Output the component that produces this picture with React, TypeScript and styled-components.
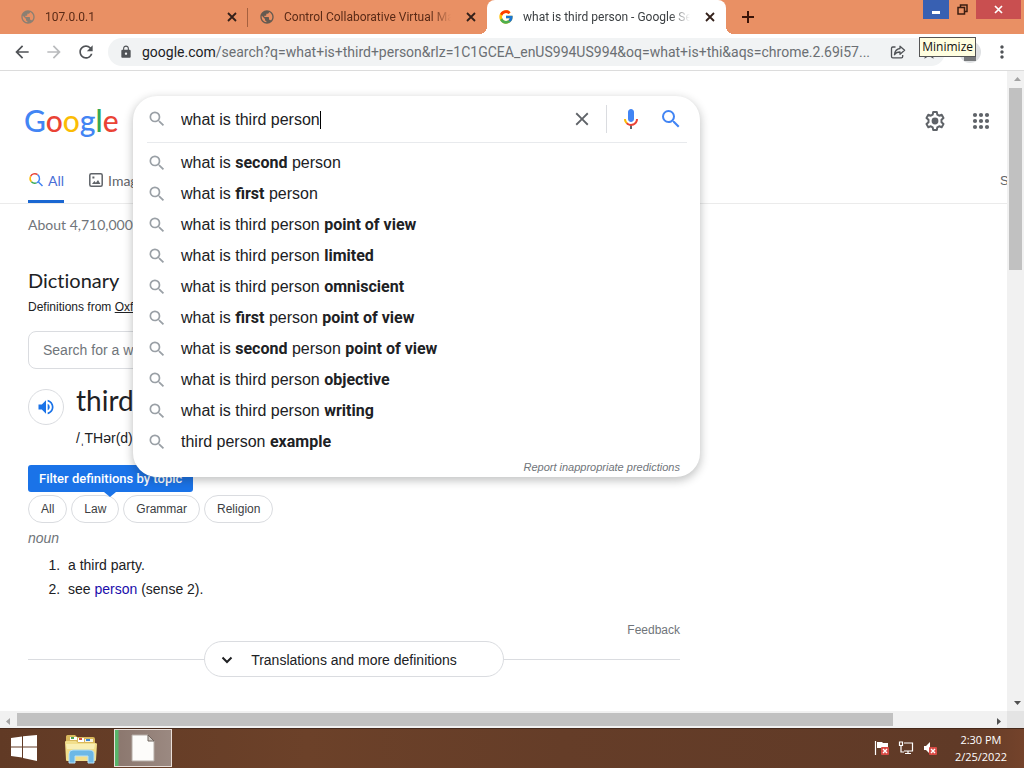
import React from "react";
import styled, { createGlobalStyle } from "styled-components";
import {
  MdArrowBack,
  MdArrowForward,
  MdClose,
  MdLock,
  MdMoreVert,
  MdOutlineStarBorder,
  MdPublic,
  MdRefresh,
  MdSearch,
  MdVolumeUp,
} from "react-icons/md";
import { FcGoogle } from "react-icons/fc";

const ui = `"Open Sans", "Noto Sans", sans-serif`;
const chrome = `Roboto, "Noto Sans", sans-serif`;
const display = `Lato, "Open Sans", sans-serif`;
const body = `"Liberation Sans", Arial, sans-serif`;

const GlobalStyle = createGlobalStyle`
  *, *::before, *::after { box-sizing: border-box; }
  html, body { margin: 0; padding: 0; }
  body { background: #fff; color: #202124; font-family: ${body}; overflow: hidden; }
  button, input { font: inherit; color: inherit; margin: 0; padding: 0; border: 0; background: none; outline: 0; }
  button { cursor: pointer; display: inline-flex; align-items: center; justify-content: center; }
  svg { display: block; flex: none; }
  h1, h2, p, ol, ul { margin: 0; padding: 0; font-weight: 400; }
`;

const Desktop = styled.div`
  display: flex;
  flex-direction: column;
  height: 100vh;
  overflow: hidden;
`;

/* ---------- browser chrome ---------- */

const TabStrip = styled.header`
  display: flex;
  height: 34px;
  padding-left: 9px;
  background: #e99064;
  font-family: ${chrome};
  font-size: 12px;
  flex: none;
`;

const Tab = styled.div<{ $active?: boolean }>`
  position: relative;
  display: flex;
  align-items: center;
  gap: 9px;
  width: 239px;
  padding: 0 9px 0 11px;
  color: ${(p) => (p.$active ? "#3c4043" : "#5a2a16")};
  background: ${(p) => (p.$active ? "#fff" : "transparent")};
  border-radius: 8px 8px 0 0;

  &::before, &::after {
    content: ${(p) => (p.$active ? `""` : "none")};
    position: absolute;
    bottom: 0;
    width: 8px;
    height: 8px;
  }
  &::before { right: 100%; background: radial-gradient(circle at 0 0, #e99064 8px, #fff 8px); }
  &::after { left: 100%; background: radial-gradient(circle at 100% 0, #e99064 8px, #fff 8px); }
`;

const TabDivider = styled.span`
  position: absolute;
  right: 0;
  top: 8px;
  width: 1px;
  height: 19px;
  background: #a5603f;
`;

const TabTitle = styled.span`
  flex: 1;
  overflow: hidden;
  white-space: nowrap;
  mask-image: linear-gradient(to right, #000 88%, transparent);
`;

const TabClose = styled.button`
  width: 14px;
  height: 14px;
  margin-left: 4px;
  color: #33201a;
`;

const NewTab = styled.button`
  width: 24px;
  height: 34px;
  margin-left: 10px;
  color: #3a1408;
`;

const WindowButtons = styled.div`
  position: relative;
  display: flex;
  margin-left: auto;
  padding-right: 3px;
`;

const WindowButton = styled.button<{ $tone: string; $width: number }>`
  width: ${(p) => p.$width}px;
  height: 19px;
  background: ${(p) => p.$tone};
`;

const Tooltip = styled.div`
  position: absolute;
  z-index: 5;
  top: 37px;
  right: 48px;
  height: 20px;
  padding: 0 2px;
  border: 1px solid #555;
  background: #fffee0;
  color: #111;
  font-family: ${ui};
  font-size: 12px;
  line-height: 18px;
`;

const Toolbar = styled.nav`
  display: flex;
  align-items: center;
  height: 37px;
  padding: 0 12px;
  border-bottom: 1px solid #dcdcdc;
  background: #fff;
  color: #505357;
  flex: none;
`;

const ToolButton = styled.button<{ $faint?: boolean }>`
  width: 20px;
  height: 20px;
  margin-right: 12px;
  color: ${(p) => (p.$faint ? "#b9bbbd" : "inherit")};
`;

const Omnibox = styled.div`
  display: flex;
  flex: 1;
  align-items: center;
  gap: 9px;
  min-width: 0;
  height: 28px;
  padding: 0 7px 0 11px;
  border-radius: 14px;
  background: #f1f3f4;
`;

const Url = styled.p`
  flex: 1;
  overflow: hidden;
  color: #6b6f73;
  font-family: ${chrome};
  font-size: 14px;
  line-height: 20px;
  white-space: nowrap;
  b { color: #202124; font-weight: 400; }
`;

const PageActions = styled.div`
  display: flex;
  align-items: center;
  gap: 14px;
`;

const Avatar = styled.span`
  display: flex;
  align-items: flex-end;
  justify-content: center;
  width: 22px;
  height: 22px;
  margin: 0 11px 0 14px;
  border-radius: 50%;
  background: #dfe1e3;
  overflow: hidden;
`;

/* ---------- page ---------- */

const Viewport = styled.div`
  display: grid;
  grid-template-columns: minmax(0, 1fr) 17px;
  grid-template-rows: minmax(0, 1fr) 17px;
  flex: 1;
  min-height: 0;
`;

const Page = styled.main`
  overflow: hidden;
  background: #fff;
`;

const Sheet = styled.div`
  width: calc(100% + 114px);
`;

const PageHeader = styled.header`
  display: flex;
  align-items: flex-start;
  height: 91px;
  padding: 25px 128px 0 24px;
`;

const Logo = styled.a`
  width: 109px;
  font-family: ${display};
  font-size: 30px;
  font-weight: 500;
  line-height: 48px;
  text-decoration: none;
`;

const Letter = styled.span<{ $tone: string }>`
  color: ${(p) => p.$tone};
`;

const SearchSlot = styled.div`
  position: relative;
  z-index: 2;
  width: 567px;
  height: 46px;
`;

const SearchPanel = styled.form`
  position: absolute;
  top: 0;
  left: 0;
  right: 0;
  border-radius: 24px;
  background: #fff;
  box-shadow: 0 3px 8px 1px rgba(32, 33, 36, 0.26);
`;

const SearchRow = styled.div`
  display: flex;
  align-items: center;
  height: 47px;
  margin: 0 13px 0 14px;
  border-bottom: 1px solid #e8eaed;
`;

const QueryLabel = styled.label`
  display: flex;
  flex: 1;
  align-items: center;
  gap: 14px;
  color: #9aa0a6;
`;

const QueryField = styled.span`
  display: flex;
  align-items: center;
  flex: 1;
  padding-top: 2px;
  color: #202124;
`;

const QueryInput = styled.input`
  field-sizing: content;
  font-size: 16px;
  line-height: 20px;
`;

const Caret = styled.span`
  width: 1px;
  height: 18px;
  background: #000;
`;

const IconButton = styled.button<{ $tone: string }>`
  width: 24px;
  height: 28px;
  color: ${(p) => p.$tone};
`;

const SearchTools = styled.div`
  display: flex;
  gap: 16px;
  margin-left: 12px;
  padding: 0 4px 0 12px;
  border-left: 1px solid #dadce0;
`;

const Suggestions = styled.ul`
  padding: 4px 14px 0;
  list-style: none;
`;

const Suggestion = styled.li`
  display: flex;
  align-items: center;
  gap: 14px;
  height: 31px;
  font-size: 16px;
  svg { color: #9aa0a6; }
  b { font-family: Roboto, sans-serif; font-weight: 700; }
`;

const Report = styled.a`
  display: block;
  height: 20px;
  padding-right: 20px;
  color: #70757a;
  font-size: 11px;
  font-style: italic;
  line-height: 20px;
  text-align: right;
  text-decoration: none;
`;

const HeaderActions = styled.div`
  display: flex;
  gap: 22px;
  margin-left: auto;
  padding-top: 11px;
  color: #5f6368;
`;

const Filters = styled.nav`
  display: flex;
  gap: 24px;
  height: 42px;
  padding: 0 28px;
  border-bottom: 1px solid #ebebeb;
`;

const Filter = styled.a<{ $active?: boolean }>`
  display: flex;
  align-items: center;
  gap: 4px;
  height: 41px;
  padding-bottom: 2px;
  border-bottom: 3px solid ${(p) => (p.$active ? "#1a67d2" : "transparent")};
  color: ${(p) => (p.$active ? "#4a6fd6" : "#5f6368")};
  font-family: ${display};
  font-size: 14px;
  text-decoration: none;
`;

const SafeSearch = styled.a`
  width: 93px;
  margin-left: auto;
  color: #5f6368;
  font-size: 13px;
  line-height: 38px;
  text-decoration: none;
`;

const Column = styled.article`
  width: 680px;
  padding: 11px 0 0 28px;
`;

const Stats = styled.p`
  color: #70757a;
  font-family: ${display};
  font-size: 14px;
  line-height: 20px;
`;

const Heading = styled.h2`
  margin-top: 31px;
  font-family: ${display};
  font-size: 20px;
  font-variant-ligatures: none;
  line-height: 28px;
`;

const Source = styled.p`
  margin-top: 3px;
  font-size: 12px;
  line-height: 20px;
  a { color: inherit; }
`;

const WordInput = styled.input`
  display: block;
  width: 420px;
  height: 38px;
  margin-top: 14px;
  padding: 0 14px;
  border: 1px solid #dadce0;
  border-radius: 8px;
  font-size: 14px;
  &::placeholder { color: #70757a; opacity: 1; }
`;

const Entry = styled.section`
  display: flex;
  gap: 12px;
  margin-top: 13px;
`;

const Speak = styled.button`
  width: 36px;
  height: 36px;
  margin-top: 7px;
  border: 1px solid #dadce0;
  border-radius: 50%;
  color: #1a73e8;
`;

const Word = styled.h1`
  font-family: ${display};
  font-size: 28px;
  line-height: 36px;
`;

const Phonetic = styled.p`
  margin-top: 10px;
  font-size: 14px;
  line-height: 20px;
`;

const Hint = styled.div`
  position: relative;
  width: fit-content;
  height: 27px;
  margin-top: 17px;
  padding: 0 11px;
  border-radius: 3px;
  background: #1a73e8;
  color: #fff;
  font-family: Roboto, sans-serif;
  font-size: 13px;
  font-weight: 500;
  line-height: 27px;

  &::after {
    content: "";
    position: absolute;
    top: 100%;
    left: 76px;
    border: 6px solid transparent;
    border-top: 5px solid #1a73e8;
  }
`;

const Chips = styled.div`
  display: flex;
  gap: 4px;
  margin-top: 3px;
`;

const Chip = styled.button`
  height: 28px;
  padding: 0 12px;
  border: 1px solid #dadce0;
  border-radius: 14px;
  color: #3c4043;
  font-size: 12px;
`;

const PartOfSpeech = styled.p`
  margin-top: 5px;
  color: #70757a;
  font-size: 14px;
  font-style: italic;
  line-height: 20px;
`;

const Senses = styled.ol`
  margin-top: 5px;
  padding-left: 36px;
  font-size: 14px;
  line-height: 24px;
  li { padding-left: 4px; }
  a { color: #1a0dab; text-decoration: none; }
`;

const Feedback = styled.a`
  display: block;
  margin-top: 19px;
  color: #70757a;
  font-size: 12px;
  line-height: 20px;
  text-align: right;
  text-decoration: none;
`;

const MoreRow = styled.div`
  display: flex;
  align-items: center;
  margin-top: 1px;
  &::before, &::after { content: ""; flex: 1; height: 1px; background: #dadce0; }
`;

const MoreButton = styled.button`
  gap: 18px;
  width: 300px;
  height: 36px;
  padding: 1px 30px 0 0;
  border: 1px solid #dadce0;
  border-radius: 18px;
  font-size: 14px;
`;

/* ---------- scroll bars ---------- */

const Scrollbar = styled.div<{ $vertical?: boolean }>`
  display: flex;
  flex-direction: ${(p) => (p.$vertical ? "column" : "row")};
  background: #f1f1f1;
  padding: ${(p) => (p.$vertical ? "0 2px" : "2px 0")};
`;

const ScrollArrow = styled.button`
  width: 17px;
  height: 17px;
  margin: auto;
  flex: none;
`;

const ScrollTrack = styled.div<{ $vertical?: boolean }>`
  display: flex;
  flex: 1;
  flex-direction: ${(p) => (p.$vertical ? "column" : "row")};
`;

const ScrollThumb = styled.div<{ $share: number }>`
  flex: 0 0 ${(p) => p.$share}%;
  background: #c1c1c1;
`;

const Corner = styled.div`
  background: #e4e4e4;
`;

/* ---------- taskbar ---------- */

const Taskbar = styled.footer`
  display: flex;
  align-items: center;
  height: 40px;
  padding: 0 17px 0 10px;
  background: linear-gradient(90deg, #613a25, #6c4129 30%, #653d28 55%, #603a27 94%, #74432b);
  box-shadow: inset 0 1px #46291b;
  color: #fff;
  flex: none;
`;

const StartButton = styled.button`
  width: 28px;
  height: 38px;
  margin-right: 23px;
`;

const TaskButton = styled.button<{ $open?: boolean }>`
  width: ${(p) => (p.$open ? 58 : 40)}px;
  height: 38px;
  margin-right: 13px;
  border: ${(p) => (p.$open ? "1px solid #eadfd9" : "0")};
  background: ${(p) => (p.$open ? "linear-gradient(90deg, #58b56a 3px, #8c786f 4px, #9b8981)" : "none")};
`;

const Tray = styled.div`
  display: flex;
  align-items: center;
  gap: 8px;
  margin-left: auto;
`;

const Clock = styled.time`
  margin-left: 9px;
  font-family: ${ui};
  font-size: 11px;
  line-height: 17px;
  text-align: center;
`;

/* ---------- drawings ---------- */

function TabCross() {
  return (
    <svg width="10" height="10" viewBox="0 0 10 10" stroke="currentColor" strokeWidth="1.8">
      <path d="M1 1l8 8M9 1L1 9" />
    </svg>
  );
}

function Gear() {
  return (
    <svg width="24" height="24" viewBox="0 0 24 24">
      <path
        fill="none"
        stroke="currentColor"
        strokeWidth="2"
        strokeLinejoin="round"
        d="M10.2 3h3.6l.5 2.6 1.9 1.1 2.5-.9 1.8 3.1-2 1.8v2.6l2 1.8-1.8 3.1-2.5-.9-1.9 1.1-.5 2.6h-3.6l-.5-2.6-1.9-1.1-2.5.9-1.8-3.1 2-1.8v-2.6l-2-1.8 1.8-3.1 2.5.9 1.9-1.1z"
      />
      <circle cx="12" cy="12" r="3.4" fill="currentColor" />
    </svg>
  );
}

function AppsGrid() {
  return (
    <svg width="24" height="24" viewBox="0 0 24 24" fill="currentColor">
      {[6, 12, 18].map((y) => [6, 12, 18].map((x) => <circle key={`${x}-${y}`} cx={x} cy={y} r="2.100" />))}
    </svg>
  );
}

function Mic() {
  return (
    <svg width="24" height="24" viewBox="0 0 24 24">
      <path fill="#4285f4" d="m12 15c1.66 0 3-1.31 3-2.97v-7.02c0-1.66-1.34-3.01-3-3.01s-3 1.34-3 3.01v7.02c0 1.66 1.34 2.97 3 2.97z" />
      <path fill="#5f6368" d="m11 18.08h2v3.92h-2z" />
      <path fill="#fbbc05" d="m7.05 16.87c-1.27-1.33-2.05-2.83-2.05-4.87h2c0 1.45.56 2.42 1.47 3.38v.32l-1.15 1.18z" />
      <path fill="#ea4335" d="m12 16.93a4.97 5.25 0 0 1-3.54-1.55l-1.41 1.49c1.26 1.34 3.02 2.13 4.95 2.13 3.87 0 6.99-2.92 6.99-7h-1.99c0 2.92-2.24 4.93-5 4.93z" />
    </svg>
  );
}

function ColorLens() {
  return (
    <svg width="16" height="16" viewBox="0 0 16 16" fill="none" strokeWidth="1.5">
      <path stroke="#ea4335" d="M2.5 4.5A4.8 4.8 0 0 1 9.6 2.6" />
      <path stroke="#fbbc05" d="M3.4 9.7a4.8 4.8 0 0 1-.9-5.2" />
      <path stroke="#34a853" d="M8.6 10.9a4.8 4.8 0 0 1-5.2-1.2" />
      <path stroke="#4285f4" d="M9.6 2.6a4.8 4.8 0 0 1-1 8.3M10.2 9.7l4.3 4.3" />
    </svg>
  );
}

function PictureIcon() {
  return (
    <svg width="16" height="16" viewBox="0 0 16 16">
      <rect x="1.8" y="1.8" width="12.4" height="12.4" rx="1.5" fill="none" stroke="currentColor" strokeWidth="1.5" />
      <path fill="currentColor" d="M4 12l2.4-3 1.5 1.7L10 8l2.4 4zM4.4 4.4h2v2h-2z" />
    </svg>
  );
}

function ShareIcon() {
  return (
    <svg width="16" height="16" viewBox="0 0 16 16" fill="none" stroke="currentColor" strokeWidth="1.3" strokeLinejoin="round">
      <path d="M5.5 3H2.8A1.3 1.3 0 0 0 1.5 4.3v8.2a1.3 1.3 0 0 0 1.3 1.3h8.6a1.3 1.3 0 0 0 1.3-1.3V11" />
      <path d="M10 2.2l4.6 4-4.6 4V8C7.3 8 5.6 8.9 4.5 10.7 4.8 7.4 6.7 4.9 10 4.5z" />
    </svg>
  );
}

function WindowsLogo() {
  return (
    <svg width="28" height="28" viewBox="0 0 28 28" fill="#fff">
      <path d="M1 4l11-1.600v10.100H1zM13 2.200L27 1v11.500H13zM1 13.500h11v10.100L1 22zM13 13.500h14V27l-14-3z" />
    </svg>
  );
}

function FolderIcon() {
  return (
    <svg width="34" height="32" viewBox="0 0 34 32">
      <path d="M2 4.5Q2 3 3.500 3H11l2 2h16q2 0 2 2v6H2z" fill="#d9b85c" />
      <path d="M6 5h7v3H6zM14 6h6v4h-6z" fill="#fff" />
      <path d="M21 7h8v3h-8z" fill="#f7f4e4" />
      <path d="M7 5h3v2H7z" fill="#4aa152" />
      <path d="M15 6h3v2h-3z" fill="#d2503c" />
      <path d="M22 7h4v2h-4z" fill="#3f86cf" />
      <path d="M1 10Q1 9 2 9h10l2 2h17q2 0 2 1l-1 16q0 1-1 1H3q-1 0-1-1z" fill="#f2df8c" />
      <path d="M2 12h29l-1 5H3z" fill="#f9efb4" />
      <path d="M5 31v-9q0-4 4-4h16q5 0 5 4v9h-6v-7H11v7z" fill="#6db8e6" stroke="#b9e2f7" />
    </svg>
  );
}

function PageIcon() {
  return (
    <svg width="24" height="28" viewBox="0 0 24 28">
      <path d="M1 1h16l6 6v20H1z" fill="#fdfcfa" stroke="#b5aca6" />
      <path d="M17 1v6h6z" fill="#cfc8c2" stroke="#6f645d" />
    </svg>
  );
}

function RedCross() {
  return (
    <>
      <rect x="7" y="7" width="8" height="8" rx="1" fill="#d94b45" />
      <path d="M9 9l4 4M13 9l-4 4" stroke="#fff" strokeWidth="1.4" />
    </>
  );
}

function FlagIcon() {
  return (
    <svg width="16" height="16" viewBox="0 0 16 16">
      <path d="M1.500 1v14" stroke="#fff" strokeWidth="1.200" />
      <path d="M3 2h5l1 1h5v6H9L8 8H3z" fill="#fff" />
      <RedCross />
    </svg>
  );
}

function NetworkIcon() {
  return (
    <svg width="16" height="16" viewBox="0 0 16 16" fill="none" stroke="#fff" strokeWidth="1.200">
      <path d="M6 3h8.500v8H6M7 13.500h6M10 11v2.500M3 6v6h3" />
      <path d="M1.500 2h3v3.500h-3z" />
    </svg>
  );
}

function MutedIcon() {
  return (
    <svg width="16" height="16" viewBox="0 0 16 16">
      <path d="M2 6h2l4-4v12L4 10H2z" fill="#fff" />
      <RedCross />
    </svg>
  );
}

function Arrow({ d, tone }: { d: string; tone: string }) {
  return (
    <svg width="9" height="9" viewBox="0 0 9 9">
      <path d={d} fill={tone} />
    </svg>
  );
}

/* ---------- data ---------- */

const suggestions: React.ReactNode[] = [
  <>what is <b>second</b> person</>,
  <>what is <b>first</b> person</>,
  <>what is third person <b>point of view</b></>,
  <>what is third person <b>limited</b></>,
  <>what is third person <b>omniscient</b></>,
  <>what is <b>first</b> person <b>point of view</b></>,
  <>what is <b>second</b> person <b>point of view</b></>,
  <>what is third person <b>objective</b></>,
  <>what is third person <b>writing</b></>,
  <>third person <b>example</b></>,
];

const logoLetters: [string, string][] = [
  ["G", "#4285f4"],
  ["o", "#ea4335"],
  ["o", "#fbbc05"],
  ["g", "#4285f4"],
  ["l", "#34a853"],
  ["e", "#ea4335"],
];

function BrowserChrome() {
  return (
    <>
      <TabStrip>
        <Tab>
          <MdPublic size={16} color="#8b7f72" />
          <TabTitle>107.0.0.1</TabTitle>
          <TabClose aria-label="Close tab"><TabCross /></TabClose>
          <TabDivider />
        </Tab>
        <Tab>
          <MdPublic size={16} color="#655a50" />
          <TabTitle>Control Collaborative Virtual Machine</TabTitle>
          <TabClose aria-label="Close tab"><TabCross /></TabClose>
        </Tab>
        <Tab $active>
          <FcGoogle size={16} />
          <TabTitle>what is third person - Google Search</TabTitle>
          <TabClose aria-label="Close tab"><TabCross /></TabClose>
        </Tab>
        <NewTab aria-label="New tab">
          <svg width="12" height="12" viewBox="0 0 12 12" stroke="currentColor" strokeWidth="2">
            <path d="M6 0v12M0 6h12" />
          </svg>
        </NewTab>
        <WindowButtons>
          <WindowButton $tone="#3860b2" $width={26} aria-label="Minimize">
            <svg width="8" height="10" viewBox="0 0 8 10"><path d="M0 6h8v3H0z" fill="#fff" /></svg>
          </WindowButton>
          <WindowButton $tone="transparent" $width={27} aria-label="Restore">
            <svg width="11" height="11" viewBox="0 0 11 11" fill="none" stroke="#3a1c10" strokeWidth="1.500">
              <path d="M1 3.500h6.500V10H1zM3.500 3V1H10v6.500H8" />
            </svg>
          </WindowButton>
          <WindowButton $tone="#c94f50" $width={45} aria-label="Close">
            <svg width="9" height="9" viewBox="0 0 9 9" stroke="#fff" strokeWidth="1.700"><path d="M1 1l7 7M8 1L1 8" /></svg>
          </WindowButton>
          <Tooltip role="tooltip">Minimize</Tooltip>
        </WindowButtons>
      </TabStrip>
      <Toolbar>
        <ToolButton aria-label="Back"><MdArrowBack size={20} /></ToolButton>
        <ToolButton aria-label="Forward" $faint><MdArrowForward size={20} /></ToolButton>
        <ToolButton aria-label="Reload"><MdRefresh size={20} /></ToolButton>
        <Omnibox>
          <MdLock size={14} />
          <Url>
            <b>google.com</b>/search?q=what+is+third+person&amp;rlz=1C1GCEA_enUS994US994&amp;oq=what+is+thi&amp;aqs=chrome.2.69i57...
          </Url>
          <PageActions>
            <ShareIcon />
            <MdOutlineStarBorder size={18} />
          </PageActions>
        </Omnibox>
        <Avatar>
          <svg width="14" height="9" viewBox="0 0 14 9"><path d="M1 0h12v7H1z" fill="#77797b" /></svg>
        </Avatar>
        <button aria-label="Menu"><MdMoreVert size={20} /></button>
      </Toolbar>
    </>
  );
}

function SearchBox() {
  return (
    <SearchSlot>
      <SearchPanel role="search">
        <SearchRow>
          <QueryLabel>
            <MdSearch size={20} aria-label="Search" />
            <QueryField>
              <QueryInput defaultValue="what is third person" />
              <Caret />
            </QueryField>
          </QueryLabel>
          <IconButton type="button" $tone="#5f6368" aria-label="Clear"><MdClose size={22} /></IconButton>
          <SearchTools>
            <IconButton type="button" $tone="#4285f4" aria-label="Search by voice"><Mic /></IconButton>
            <IconButton type="submit" $tone="#4285f4" aria-label="Google Search"><MdSearch size={24} /></IconButton>
          </SearchTools>
        </SearchRow>
        <Suggestions>
          {suggestions.map((text, i) => (
            <Suggestion key={i}>
              <MdSearch size={20} />
              <span>{text}</span>
            </Suggestion>
          ))}
        </Suggestions>
        <Report href="#report">Report inappropriate predictions</Report>
      </SearchPanel>
    </SearchSlot>
  );
}

function ResultsPage() {
  return (
    <Page>
      <Sheet>
        <PageHeader>
          <Logo href="#home" aria-label="Google">
            {logoLetters.map(([letter, tone], i) => (
              <Letter key={i} $tone={tone}>{letter}</Letter>
            ))}
          </Logo>
          <SearchBox />
          <HeaderActions>
            <IconButton $tone="#5f6368" aria-label="Settings"><Gear /></IconButton>
            <IconButton $tone="#5f6368" aria-label="Google apps"><AppsGrid /></IconButton>
          </HeaderActions>
        </PageHeader>
        <Filters>
          <Filter $active href="#all"><ColorLens />All</Filter>
          <Filter href="#images"><PictureIcon />Images</Filter>
          <SafeSearch href="#safe">SafeSearch on</SafeSearch>
        </Filters>
        <Column>
          <Stats>About 4,710,000,000 results</Stats>
          <Heading>Dictionary</Heading>
          <Source>Definitions from <a href="#oxford">Oxford Languages</a></Source>
          <WordInput aria-label="Search for a word" placeholder="Search for a word" />
          <Entry>
            <Speak aria-label="Listen"><MdVolumeUp size={20} /></Speak>
            <div>
              <Word>third person</Word>
              <Phonetic>/ˌTHər(d) ˈpərs(ə)n/</Phonetic>
            </div>
          </Entry>
          <Hint>Filter definitions by topic</Hint>
          <Chips>
            <Chip>All</Chip>
            <Chip>Law</Chip>
            <Chip>Grammar</Chip>
            <Chip>Religion</Chip>
          </Chips>
          <PartOfSpeech>noun</PartOfSpeech>
          <Senses>
            <li>a third party.</li>
            <li>see <a href="#person">person</a> (sense 2).</li>
          </Senses>
          <Feedback href="#feedback">Feedback</Feedback>
          <MoreRow>
            <MoreButton>
              <svg width="12" height="8" viewBox="0 0 12 8" fill="none" stroke="#202124" strokeWidth="2"><path d="M1.500 1.500L6 6l4.500-4.500" /></svg>
              Translations and more definitions
            </MoreButton>
          </MoreRow>
        </Column>
      </Sheet>
    </Page>
  );
}

export default function App() {
  return (
    <Desktop>
      <GlobalStyle />
      <BrowserChrome />
      <Viewport>
        <ResultsPage />
        <Scrollbar $vertical>
          <ScrollArrow aria-label="Scroll up"><Arrow d="M1 6l3.500-4L8 6z" tone="#a3a3a3" /></ScrollArrow>
          <ScrollTrack $vertical><ScrollThumb $share={30} /></ScrollTrack>
          <ScrollArrow aria-label="Scroll down"><Arrow d="M1 3l3.500 4L8 3z" tone="#505050" /></ScrollArrow>
        </Scrollbar>
        <Scrollbar>
          <ScrollArrow aria-label="Scroll left"><Arrow d="M6 1L2 4.500 6 8z" tone="#a3a3a3" /></ScrollArrow>
          <ScrollTrack><ScrollThumb $share={90} /></ScrollTrack>
          <ScrollArrow aria-label="Scroll right"><Arrow d="M3 1l4 3.500L3 8z" tone="#505050" /></ScrollArrow>
        </Scrollbar>
        <Corner />
      </Viewport>
      <Taskbar>
        <StartButton aria-label="Start"><WindowsLogo /></StartButton>
        <TaskButton aria-label="File Explorer"><FolderIcon /></TaskButton>
        <TaskButton $open aria-label="Document"><PageIcon /></TaskButton>
        <Tray>
          <FlagIcon />
          <NetworkIcon />
          <MutedIcon />
          <Clock>2:30 PM<br />2/25/2022</Clock>
        </Tray>
      </Taskbar>
    </Desktop>
  );
}
